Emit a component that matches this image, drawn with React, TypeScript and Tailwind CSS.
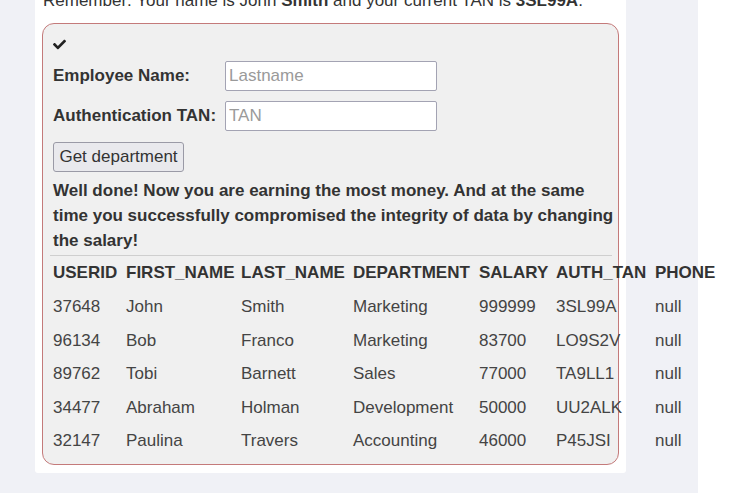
import { FaCheck } from "react-icons/fa";

const rows = [
  ["37648", "John", "Smith", "Marketing", "999999", "3SL99A", "null"],
  ["96134", "Bob", "Franco", "Marketing", "83700", "LO9S2V", "null"],
  ["89762", "Tobi", "Barnett", "Sales", "77000", "TA9LL1", "null"],
  ["34477", "Abraham", "Holman", "Development", "50000", "UU2ALK", "null"],
  ["32147", "Paulina", "Travers", "Accounting", "46000", "P45JSI", "null"],
];

const headers = ["USERID", "FIRST_NAME", "LAST_NAME", "DEPARTMENT", "SALARY", "AUTH_TAN", "PHONE"];
const widths = ["w-[73px]", "w-[115px]", "w-[112px]", "w-[126px]", "w-[77px]", "w-[99px]", "w-[60px]"];

export default function App() {
  return (
    <div className="h-[493px] w-[749px] overflow-hidden bg-white font-['Liberation_Sans',Arial,sans-serif] text-[17px] text-[#333]">
      {/* main column, the table spills over onto the white strip on the right */}
      <div className="h-full w-[698px] bg-[#f0f1f6] pl-[35px]">
        <div className="flow-root w-[591px] rounded-b-[3px] bg-white px-[7px] pb-[8px]">
          <p className="-mt-[10px] mb-[11px] ml-[1px] h-[22px] leading-[22px] whitespace-nowrap">
            Remember: Your name is John <b>Smith</b> and your current TAN is <b>3SL99A</b>.
          </p>

          {/* lesson box */}
          <div className="rounded-[12px] border border-[#c47a7a] bg-[#f0f0f0] px-[10px] pt-[8px] pb-[6px]">
            <div className="flex h-[24px] items-center">
              <FaCheck size={13} className="text-[#222]" />
            </div>

            <div className="mt-[5px] flex h-[30px] items-center">
              <label className="w-[172px] font-bold">Employee Name:</label>
              <input
                placeholder="Lastname"
                className="h-[30px] w-[212px] rounded-[2px] border border-[#a3a3b3] bg-white px-[3px] placeholder:text-[#9a9a9a]"
              />
            </div>
            <div className="mt-[10px] flex h-[30px] items-center">
              <label className="w-[172px] font-bold">Authentication TAN:</label>
              <input
                placeholder="TAN"
                className="h-[30px] w-[212px] rounded-[2px] border border-[#a3a3b3] bg-white px-[3px] placeholder:text-[#9a9a9a]"
              />
            </div>

            <button className="mt-[11px] h-[30px] w-[131px] rounded-[3px] border border-[#9a9aa6] bg-[#e9e9ed] text-[#333]">
              Get department
            </button>

            <p className="mt-[6px] w-[566px] font-bold leading-[25px]">
              Well done! Now you are earning the most money. And at the same time you successfully
              compromised the integrity of data by changing the salary!
            </p>
            <div className="mt-[2px] -ml-[3px] w-[562px] border-t border-[#cfcfcf]" />

            <table className="w-[662px] table-fixed border-collapse text-left">
              <thead>
                <tr className="h-[34px]">
                  {headers.map((h, i) => (
                    <th key={h} className={`${widths[i]} p-0 font-bold whitespace-nowrap`}>
                      {h}
                    </th>
                  ))}
                </tr>
              </thead>
              <tbody>
                {rows.map((r) => (
                  <tr key={r[0]} className="h-[33.5px] text-[#444]">
                    {r.map((c, i) => (
                      <td key={i} className="p-0 whitespace-nowrap">
                        {c}
                      </td>
                    ))}
                  </tr>
                ))}
              </tbody>
            </table>
          </div>
        </div>
      </div>
    </div>
  );
}
